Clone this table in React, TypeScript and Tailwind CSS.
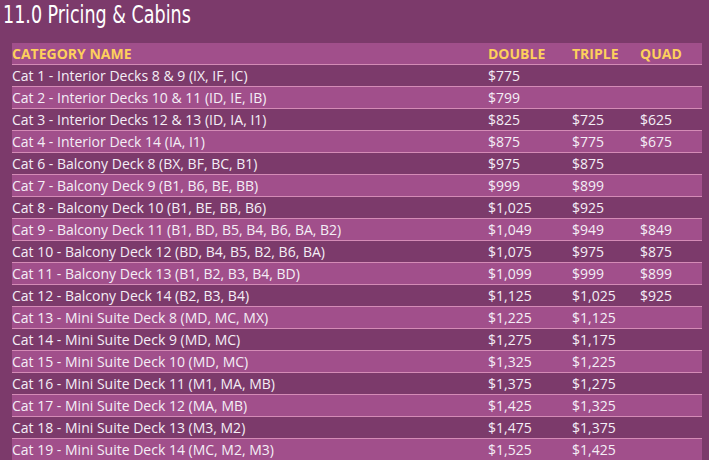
const rows: [string, string, string, string][] = [
  ['Cat 1 - Interior Decks 8 & 9 (IX, IF, IC)', '$775', '', ''],
  ['Cat 2 - Interior Decks 10 & 11 (ID, IE, IB)', '$799', '', ''],
  ['Cat 3 - Interior Decks 12 & 13 (ID, IA, I1)', '$825', '$725', '$625'],
  ['Cat 4 - Interior Deck 14 (IA, I1)', '$875', '$775', '$675'],
  ['Cat 6 - Balcony Deck 8 (BX, BF, BC, B1)', '$975', '$875', ''],
  ['Cat 7 - Balcony Deck 9 (B1, B6, BE, BB)', '$999', '$899', ''],
  ['Cat 8 - Balcony Deck 10 (B1, BE, BB, B6)', '$1,025', '$925', ''],
  ['Cat 9 - Balcony Deck 11 (B1, BD, B5, B4, B6, BA, B2)', '$1,049', '$949', '$849'],
  ['Cat 10 - Balcony Deck 12 (BD, B4, B5, B2, B6, BA)', '$1,075', '$975', '$875'],
  ['Cat 11 - Balcony Deck 13 (B1, B2, B3, B4, BD)', '$1,099', '$999', '$899'],
  ['Cat 12 - Balcony Deck 14 (B2, B3, B4)', '$1,125', '$1,025', '$925'],
  ['Cat 13 - Mini Suite Deck 8 (MD, MC, MX)', '$1,225', '$1,125', ''],
  ['Cat 14 - Mini Suite Deck 9 (MD, MC)', '$1,275', '$1,175', ''],
  ['Cat 15 - Mini Suite Deck 10 (MD, MC)', '$1,325', '$1,225', ''],
  ['Cat 16 - Mini Suite Deck 11 (M1, MA, MB)', '$1,375', '$1,275', ''],
  ['Cat 17 - Mini Suite Deck 12 (MA, MB)', '$1,425', '$1,325', ''],
  ['Cat 18 - Mini Suite Deck 13 (M3, M2)', '$1,475', '$1,375', ''],
  ['Cat 19 - Mini Suite Deck 14 (MC, M2, M3)', '$1,525', '$1,425', ''],
];

function Row({ cells, odd }: { cells: string[]; odd: boolean }) {
  return (
    <div
      className={`grid grid-cols-[476px_84px_68px_1fr] h-[22px] border-b border-[#d48bb6] text-[14px] leading-[21px] text-[#f4eef6] ${
        odd ? 'bg-[#7c3a6b]' : 'bg-[#a14f8b]'
      }`}
    >
      {cells.map((c, i) => (
        <div key={i} className="whitespace-nowrap">
          {c}
        </div>
      ))}
    </div>
  );
}

export default function App() {
  return (
    <div className="w-[709px] h-[460px] overflow-hidden bg-[#7c3a6b] font-['Open_Sans',sans-serif]">
      <div className="h-[43px] pl-[3px]">
        <h1 className="inline-block origin-left scale-x-[0.78] text-[25px] leading-[30px] text-white font-['DejaVu_Sans_Condensed','DejaVu_Sans',sans-serif] whitespace-nowrap">
          11.0 Pricing &amp; Cabins
        </h1>
      </div>
      <div className="ml-[12px] w-[690px]">
        <div className="grid grid-cols-[476px_84px_68px_1fr] h-[22px] border-b border-[#d48bb6] bg-[#a14f8b] text-[14px] leading-[21px] font-bold text-[#fdd05c]">
          <div>CATEGORY NAME</div>
          <div>DOUBLE</div>
          <div>TRIPLE</div>
          <div>QUAD</div>
        </div>
        {rows.map((r, i) => (
          <Row key={i} cells={r} odd={i % 2 === 0} />
        ))}
      </div>
    </div>
  );
}
